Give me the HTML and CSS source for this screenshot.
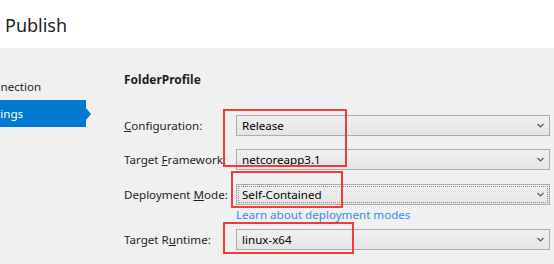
FILE: index.html
```html
<html lang="en">
<head>
  <meta charset="UTF-8">
  <title>Publish</title>
  <link rel="stylesheet" href="styles.css">
</head>
<body>

  <div class="header">
    <h1>Publish</h1>
  </div>

  <div class="main">
    <!-- Menu lateral -->
    <div class="sidebar">
      <div class="nav-item"><span class="nav-text conn">Connection</span></div>
      <div class="nav-item active"><span class="nav-text sett">Settings</span></div>
    </div>

    <div class="content">
      <div class="profile">FolderProfile</div>

      <div class="row first">
        <label class="label"><u>C</u>onfiguration:</label>
        <div class="select"><span>Release</span><svg class="chev" width="7" height="5" viewBox="0 0 7 5"><polyline points="0.5,1 3.5,4 6.5,1" fill="none" stroke="#5a5a5a" stroke-width="1.2"/></svg></div>
      </div>

      <div class="row">
        <label class="label">Target <u>F</u>ramework:</label>
        <div class="select"><span>netcoreapp3.1</span><svg class="chev" width="7" height="5" viewBox="0 0 7 5"><polyline points="0.5,1 3.5,4 6.5,1" fill="none" stroke="#5a5a5a" stroke-width="1.2"/></svg></div>
      </div>

      <div class="row mode">
        <label class="label">Deployment <u>M</u>ode:</label>
        <div class="select focus"><span>Self-Contained</span><svg class="chev" width="7" height="5" viewBox="0 0 7 5"><polyline points="0.5,1 3.5,4 6.5,1" fill="none" stroke="#5a5a5a" stroke-width="1.2"/></svg></div>
      </div>
      <a class="learn" href="#">Learn about deployment modes</a>

      <div class="row runtime">
        <label class="label">Target R<u>u</u>ntime:</label>
        <div class="select"><span>linux-x64</span><svg class="chev" width="7" height="5" viewBox="0 0 7 5"><polyline points="0.5,1 3.5,4 6.5,1" fill="none" stroke="#5a5a5a" stroke-width="1.2"/></svg></div>
      </div>
    </div>
  </div>

  <!-- Marcacoes em vermelho -->
  <div class="mark mark1"></div>
  <div class="mark mark2"></div>
  <div class="mark mark3"></div>

</body>
</html>
```

FILE: styles.css
```css
body {
  margin: 0;
  height: 264px;
  overflow: hidden;
  background: #f0f0f0;
  font-family: 'Noto Sans', sans-serif;
  font-size: 11.6px;
  color: #1e1e1e;
  position: relative;
}

.header {
  height: 48px;
  background: #fff;
}

.header h1 {
  margin: 0;
  padding: 13px 0 0 5px;
  font-size: 18px;
  font-weight: normal;
  line-height: 24px;
  color: #1e1e1e;
}

.main {
  display: flex;
}

/* Menu lateral */
.sidebar {
  width: 124px;
  padding-top: 25px;
  flex-shrink: 0;
}

.nav-item {
  position: relative;
  width: 86px;
  height: 27px;
  line-height: 27px;
  overflow: hidden;
  white-space: nowrap;
}

.nav-text.conn { margin-left: -21px; }
.nav-text.sett { margin-left: -21px; }

.nav-item.active {
  background: #0079d1;
  color: #fff;
  overflow: visible;
}

.nav-item.active::after {
  content: "";
  position: absolute;
  right: -5px;
  top: 8px;
  border-left: 5px solid #0079d1;
  border-top: 6px solid transparent;
  border-bottom: 6px solid transparent;
}

.nav-item.active .nav-text {
  display: inline-block;
  width: 86px;
  overflow: hidden;
}

.content {
  flex: 1;
  padding-top: 23px;
}

.profile {
  font-weight: bold;
  font-size: 12px;
  line-height: 18px;
  height: 18px;
}

.row {
  display: flex;
  align-items: center;
  height: 21px;
  margin-top: 13px;
}

.row.first { margin-top: 26px; }
.row.mode { margin-top: 14px; }
.row.runtime { margin-top: 6px; }

.label {
  width: 112px;
  flex-shrink: 0;
  white-space: nowrap;
}

.select {
  width: 314px;
  height: 21px;
  box-sizing: border-box;
  border: 1px solid #adadad;
  background: linear-gradient(#f0f0f0, #e5e5e5);
  display: flex;
  align-items: center;
  justify-content: space-between;
  padding: 0 5px 0 5px;
  color: #000;
}

.select.focus {
  outline: 1px dotted #8a8a8a;
  outline-offset: -3px;
}

.learn {
  display: block;
  margin-left: 112px;
  height: 18px;
  line-height: 20px;
  color: #2b8ff0;
  text-decoration: none;
}

/* Retangulos vermelhos */
.mark {
  position: absolute;
  border: 2px solid #f23b3b;
  box-sizing: border-box;
}

.mark1 { left: 223px; top: 109px; width: 124px; height: 58px; }
.mark2 { left: 231px; top: 171px; width: 112px; height: 37px; }
.mark3 { left: 223px; top: 222px; width: 131px; height: 32px; }
```
